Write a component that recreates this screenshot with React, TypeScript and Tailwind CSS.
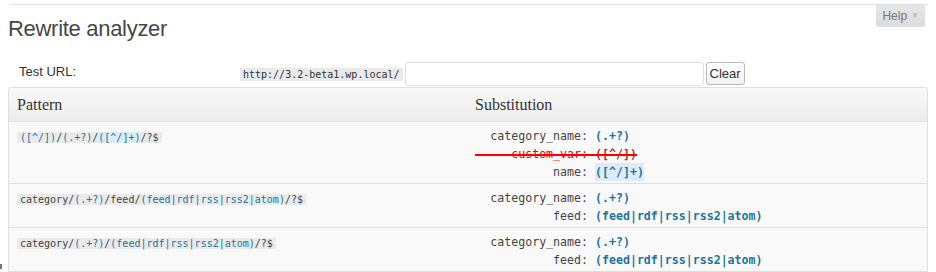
type Part = { text: string; kind: "lit" | "group" | "hl" };

type Sub = {
  key: string;
  value: string;
  unused?: boolean;
  hl?: boolean;
};

type Rule = {
  pattern: Part[];
  subs: Sub[];
};

const rules: Rule[] = [
  {
    pattern: [
      { text: "([^/])", kind: "group" },
      { text: "/", kind: "lit" },
      { text: "(.+?)", kind: "group" },
      { text: "/", kind: "lit" },
      { text: "([^/]+)", kind: "hl" },
      { text: "/?$", kind: "lit" },
    ],
    subs: [
      { key: "category_name:", value: "(.+?)" },
      { key: "custom_var:", value: "([^/])", unused: true },
      { key: "name:", value: "([^/]+)", hl: true },
    ],
  },
  {
    pattern: [
      { text: "category/", kind: "lit" },
      { text: "(.+?)", kind: "group" },
      { text: "/feed/", kind: "lit" },
      { text: "(feed|rdf|rss|rss2|atom)", kind: "group" },
      { text: "/?$", kind: "lit" },
    ],
    subs: [
      { key: "category_name:", value: "(.+?)" },
      { key: "feed:", value: "(feed|rdf|rss|rss2|atom)" },
    ],
  },
  {
    pattern: [
      { text: "category/", kind: "lit" },
      { text: "(.+?)", kind: "group" },
      { text: "/", kind: "lit" },
      { text: "(feed|rdf|rss|rss2|atom)", kind: "group" },
      { text: "/?$", kind: "lit" },
    ],
    subs: [
      { key: "category_name:", value: "(.+?)" },
      { key: "feed:", value: "(feed|rdf|rss|rss2|atom)" },
    ],
  },
];

const mono = "font-['DejaVu_Sans_Mono',monospace]";

function PatternCode({ parts }: { parts: Part[] }) {
  return (
    <code className={`${mono} bg-[#eaeaea] px-[3px] text-[10px] text-[#444]`}>
      {parts.map((part, i) => (
        <span
          key={i}
          className={
            part.kind === "lit"
              ? "text-[#444]"
              : part.kind === "hl"
                ? "bg-[#dcebf6] text-[#21759b]"
                : "text-[#21759b]"
          }
        >
          {part.text}
        </span>
      ))}
    </code>
  );
}

function SubLine({ sub }: { sub: Sub }) {
  return (
    <div className="flex">
      <div className={`relative inline-flex ${mono} text-[11.6px] leading-[18px]`}>
        <span
          className={`w-[120px] pr-[7px] text-right ${
            sub.unused ? "text-[#e00]" : "text-[#444]"
          }`}
        >
          {sub.key}
        </span>
        <span
          className={`font-bold ${
            sub.unused
              ? "text-[#a33]"
              : sub.hl
                ? "bg-[#dcebf6] text-[#21759b]"
                : "text-[#21759b]"
          }`}
        >
          {sub.value}
        </span>
        {sub.unused && (
          <span className="absolute inset-x-0 top-[9px] h-[1.5px] bg-[#f00]" />
        )}
      </div>
    </div>
  );
}

export default function App() {
  return (
    <div className="relative min-h-[272px] bg-white font-['Liberation_Sans',Arial,sans-serif] text-[#333]">
      <div className="pt-[4px] pl-[10px] pr-[8px]">
        <div className="h-px bg-[#dfdfdf]" />
      </div>

      <div className="flex items-start justify-between pl-[8px] pr-[11px]">
        <h2 className="pt-[9px] text-[22px] leading-[29px] tracking-[-0.3px] text-[#464646]">
          Rewrite analyzer
        </h2>
        <div className="flex h-[22px] items-center gap-[4px] rounded-b-[3px] bg-gradient-to-b from-[#e6e6e6] to-[#dcdcdc] pl-[6px] pr-[6px] text-[12px] text-[#777]">
          <span>Help</span>
          <span className="text-[8px] text-[#bbb]">▼</span>
        </div>
      </div>

      <div className="mt-[19px] flex h-[24px] items-center pl-[19px]">
        <span className="mb-[4px] w-[221px] text-[13px] leading-[16px]">Test URL:</span>
        <code className={`${mono} bg-[#eaeaea] px-[3px] text-[10px] leading-[13px] text-[#333]`}>
          http://3.2-beta1.wp.local/
        </code>
        <input
          type="text"
          className="ml-[2px] h-[24px] w-[299px] rounded-[3px] border border-[#dfdfdf] bg-white px-[4px] text-[13px] outline-none"
        />
        <button
          type="button"
          className="mb-[1px] ml-[2px] h-[23px] rounded-[3px] border border-[#bbb] bg-gradient-to-b from-white to-[#f2f2f2] px-[3px] text-[13px] leading-[20px] text-[#333]"
        >
          Clear
        </button>
      </div>

      <div className="mx-[8px] mt-[1px] rounded-t-[3px] border border-[#dfdfdf] bg-[#f9f9f9]">
        <div className="grid grid-cols-2 rounded-t-[3px] border-b border-[#dfdfdf] bg-gradient-to-b from-[#f9f9f9] to-[#ececec] font-['Liberation_Serif',Georgia,serif] text-[16px] leading-[33px] text-[#333]">
          <div className="px-[8px]">Pattern</div>
          <div className="pl-[7px]">Substitution</div>
        </div>
        {rules.map((rule, i) => (
          <div
            key={i}
            className={`grid grid-cols-2 pt-[5px] pb-[2px] ${
              i > 0 ? "border-t border-[#dfdfdf]" : ""
            }`}
          >
            <div className="px-[8px] leading-[18px]">
              <PatternCode parts={rule.pattern} />
            </div>
            <div className="pl-[7px]">
              {rule.subs.map((sub, j) => (
                <SubLine key={j} sub={sub} />
              ))}
            </div>
          </div>
        ))}
      </div>

      <div className="absolute left-0 top-[264px] h-[5px] w-[2px] bg-[#777]" />
    </div>
  );
}
